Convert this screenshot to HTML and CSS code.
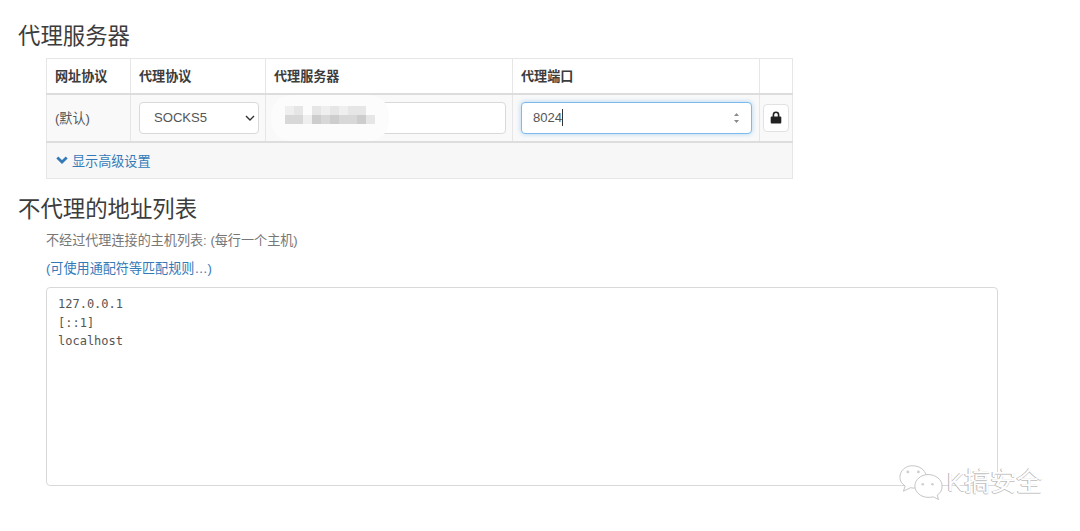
FILE: index.html
```html
<!DOCTYPE html>
<html lang="zh-CN">
<head>
<meta charset="utf-8">
<title>代理服务器</title>
<link rel="stylesheet" href="styles.css">
</head>
<body>
<main class="page">
  <h2 class="title title-first">代理服务器</h2>
  <section class="indent">
    <table class="proxy">
      <colgroup>
        <col class="c1"><col class="c2"><col class="c3"><col class="c4"><col class="c5">
      </colgroup>
      <thead>
        <tr><th>网址协议</th><th>代理协议</th><th>代理服务器</th><th>代理端口</th><th></th></tr>
      </thead>
      <tbody>
        <tr>
          <td class="scheme">(默认)</td>
          <td>
            <div class="select">
              <span>SOCKS5</span>
              <svg class="chev" width="10" height="6" viewBox="0 0 10 6"><path d="M1 1l4 4 4-4" fill="none" stroke="#333" stroke-width="1.4"/></svg>
            </div>
          </td>
          <td class="server-cell">
            <div class="input"></div>
            <div class="mosaic" aria-hidden="true">
              <div class="mosaic-grid">
                <i class="a"></i><i class="b"></i><i class="w"></i><i class="b"></i><i class="a"></i><i class="b"></i><i class="a"></i><i class="b"></i><i class="b"></i><i class="w"></i>
                <i class="c"></i><i class="c"></i><i class="a"></i><i class="d"></i><i class="c"></i><i class="d"></i><i class="c"></i><i class="c"></i><i class="d"></i><i class="b"></i>
              </div>
            </div>
          </td>
          <td>
            <div class="input focus">
              <span class="port">8024<b class="caret"></b></span>
              <svg class="spin" width="7" height="12" viewBox="0 0 7 12"><path d="M3.5 1L6 4H1z M3.5 11L1 8h5z" fill="#8a8a8a"/></svg>
            </div>
          </td>
          <td class="lock-cell">
            <button class="lock" type="button" aria-label="lock">
              <svg width="12" height="13" viewBox="0 0 12 13"><path d="M3.400 6V3.900a2.600 2.600 0 0 1 5.200 0V6" fill="none" stroke="#222" stroke-width="1.6"/><rect x="0.700" y="5.500" width="10.600" height="7" rx="1" fill="#222"/></svg>
            </button>
          </td>
        </tr>
      </tbody>
      <tfoot>
        <tr>
          <td colspan="5">
            <a class="advanced" href="#">
              <svg width="12" height="8" viewBox="0 0 12 8"><path d="M1.300 1.500L6 6l4.700-4.500" fill="none" stroke="#337ab7" stroke-width="2.800"/></svg>
              显示高级设置
            </a>
          </td>
        </tr>
      </tfoot>
    </table>
  </section>
  <h2 class="title title-second">不代理的地址列表</h2>
  <section class="indent">
    <p class="help">不经过代理连接的主机列表: (每行一个主机)</p>
    <p class="rules"><a href="#">(可使用通配符等匹配规则…)</a></p>
    <div class="bypass">127.0.0.1
[::1]
localhost</div>
  </section>
</main>
<div class="watermark">
  <svg width="44" height="36" viewBox="0 0 50 41">
    <g fill="#fff" stroke="#bdbdbd" stroke-width="1">
      <path d="M15 2C7 2 1 8 1 15c0 4 2 8 6 10l-2 6 8-4c2 .5 4 .5 6 .3C28 26 33 21 31 13 29 6 23 2 15 2z"/>
      <path d="M33 12c-8 0-15 6-15 13s7 13 15 13c2 0 4 0 6-.6l6 3-1.500-5c4-2.400 5.500-6 5.500-10.400 0-7-7-13-16-13z"/>
    </g>
    <g fill="#cfcfcf"><circle cx="10" cy="9" r="1.600"/><circle cx="22" cy="9" r="1.600"/><circle cx="27" cy="23" r="1.500"/><circle cx="38" cy="23" r="1.500"/></g>
  </svg>
  <span class="wm-text">K搞安全</span>
</div>
</body>
</html>
```

FILE: styles.css
```css
* { box-sizing: border-box; }
html, body { margin: 0; padding: 0; background: #fff; overflow: hidden; }
body {
  width: 1080px;
  height: 531px;
  position: relative;
  font-family: "Liberation Sans", "Noto Sans CJK SC", sans-serif;
  font-size: 13.1px;
  color: #555;
}
.page { padding: 0 0 0 19px; }
.title {
  margin: 0 0 0 -1px;
  font-size: 22.4px;
  font-weight: 400;
  line-height: 30px;
  color: #3c3c3c;
}
.title-first { height: 58px; padding-top: 22px; }
.title-second { margin-top: 16px; }
.indent { padding-left: 27px; }
.proxy {
  width: 746px;
  border-collapse: collapse;
  table-layout: fixed;
  border: 1px solid #e6e6e6;
}
.c1 { width: 84px; }
.c2 { width: 135px; }
.c3 { width: 247px; }
.c4 { width: 247px; }
.c5 { width: 33px; }
.proxy th {
  height: 35px;
  padding: 0 8px;
  text-align: left;
  font-weight: 700;
  color: #3c3c3c;
  border: 1px solid #e6e6e6;
  border-bottom: 2px solid #ddd;
}
.proxy tbody td {
  height: 48px;
  padding: 0 8px;
  background: #f9f9f9;
  border: 1px solid #e6e6e6;
  border-bottom: 2px solid #ddd;
}
.proxy tfoot td {
  height: 37px;
  padding: 0 9px;
  background: #f7f7f7;
}
.scheme { color: #555; }
.select, .input {
  height: 32px;
  background: #fff;
  border: 1px solid #d9d9d9;
  border-radius: 4px;
  display: flex;
  align-items: center;
}
.select {
  width: 120px;
  padding: 0 3px 0 14px;
  justify-content: space-between;
  font-size: 13.1px;
  color: #555;
}
.input { width: 232px; padding: 0 11px; }
.input.focus {
  width: 231px;
  border-color: #7dbaeb;
  box-shadow: 0 0 5px rgba(102, 175, 233, .5);
  justify-content: space-between;
  font-size: 13.1px;
  color: #555;
}
.port { display: flex; align-items: center; }
.caret { display: block; width: 1px; height: 17px; background: #333; }
.server-cell { position: relative; }
.mosaic {
  position: absolute;
  left: 5px;
  top: 0;
  width: 118px;
  height: 46px;
  background: #fcfcfc;
  border-radius: 20px;
  padding: 11px 0 0 14px;
  filter: blur(.5px);
}
.mosaic-grid {
  display: grid;
  grid-template-columns: repeat(10, 9px);
  grid-auto-rows: 9px;
}
.mosaic-grid i { display: block; }
.mosaic-grid .a { background: #efefef; }
.mosaic-grid .b { background: #e6e6e6; }
.mosaic-grid .c { background: #d8d8d8; }
.mosaic-grid .d { background: #cdcdcd; }
.mosaic-grid .w { background: transparent; }
.lock-cell { padding: 0 !important; text-align: center; }
.lock {
  width: 26px;
  height: 28px;
  padding: 0;
  background: #fff;
  border: 1px solid #e2e2e2;
  border-radius: 4px;
  display: inline-flex;
  align-items: center;
  justify-content: center;
  vertical-align: middle;
}
.advanced {
  display: inline-flex;
  align-items: center;
  gap: 4px;
  color: #337ab7;
  text-decoration: none;
}
.help { margin: 6px 0 0; height: 20px; line-height: 20px; color: #777; }
.rules { margin: 8px 0 0; height: 20px; line-height: 20px; }
.rules a { color: #337ab7; text-decoration: none; }
.bypass {
  width: 952px;
  height: 199px;
  margin-top: 8px;
  padding: 7px 11px;
  border: 1px solid #d9d9d9;
  border-radius: 4px;
  font-family: "DejaVu Sans Mono", "Liberation Mono", monospace;
  font-size: 12px;
  line-height: 18.5px;
  color: #555;
  white-space: pre;
}
.watermark {
  position: absolute;
  left: 899px;
  top: 464px;
  display: flex;
  align-items: center;
  gap: 4px;
}
.wm-text {
  font-size: 26px;
  line-height: 36px;
  color: #fff;
  text-shadow: -1px 0 0 #b5b5b5, 0 1px 0 #c8c8c8;
}
```
